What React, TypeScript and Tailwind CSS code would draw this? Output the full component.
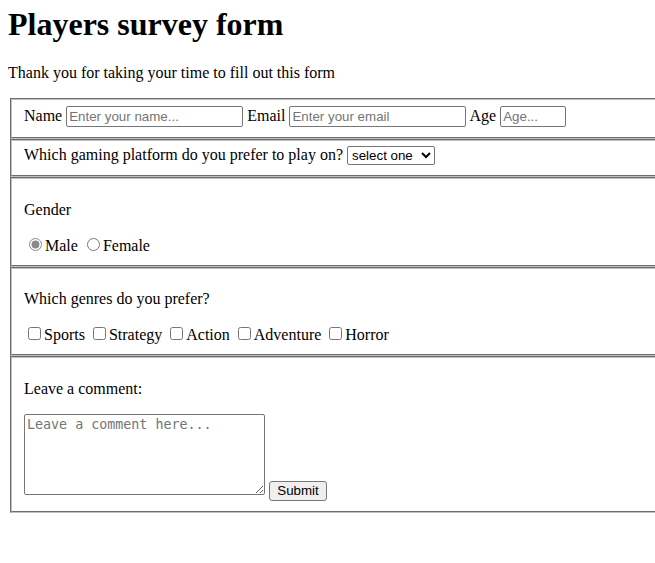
import React from "react";

const inputCls =
  "h-[21px] border border-[#767676] rounded-[2px] px-[2px] py-[1px] text-[13.33px] leading-[normal] font-['Liberation_Sans',Arial,sans-serif] placeholder:text-[#757575] align-baseline";

const fieldsetCls = "mx-[2px] border-2 border-[#c0c0c0] [border-style:groove] px-3 pt-[5.6px] pb-[10px] min-w-0";

const genres = ["Sports", "Strategy", "Action", "Adventure", "Horror"];

export default function App() {
  return (
    <div className="overflow-hidden bg-white text-black font-['Liberation_Serif','Times_New_Roman',serif] text-[16px] leading-[normal]">
      <div className="w-[720px] px-2 pb-10">
        <h1 className="text-[32px] font-bold leading-[normal] mt-[6px] mb-[21px]">Players survey form</h1>
        <p className="mb-4">Thank you for taking your time to fill out this form</p>
        <form onSubmit={(e) => e.preventDefault()}>
          <fieldset className={fieldsetCls}>
            <label>
              Name <input type="text" placeholder="Enter your name..." className={`${inputCls} w-[177px]`} />
            </label>{" "}
            <label>
              Email <input type="email" placeholder="Enter your email" className={`${inputCls} w-[177px]`} />
            </label>{" "}
            <label>
              Age <input type="number" placeholder="Age..." className={`${inputCls} w-[66px]`} />
            </label>
          </fieldset>

          <fieldset className={fieldsetCls}>
            <label>
              Which gaming platform do you prefer to play on?{" "}
              <select className="h-[19px] w-[88px] border border-[#767676] rounded-[2px] text-[13.33px] leading-[normal] font-['Liberation_Sans',Arial,sans-serif] align-baseline">
                <option>select one</option>
                <option>PC</option>
                <option>Console</option>
                <option>Mobile</option>
              </select>
            </label>
          </fieldset>

          <fieldset className={fieldsetCls}>
            <p className="my-4">Gender</p>
            <label>
              <input type="radio" name="gender" defaultChecked className="mt-[3px] mr-[3px] ml-[5px] accent-[#8a8a8a]" />
              Male
            </label>{" "}
            <label>
              <input type="radio" name="gender" className="mt-[3px] mr-[3px] ml-[5px]" />
              Female
            </label>
          </fieldset>

          <fieldset className={fieldsetCls}>
            <p className="my-4">Which genres do you prefer?</p>
            {genres.map((g) => (
              <React.Fragment key={g}>
                <label>
                  <input type="checkbox" className="my-[3px] mr-[3px] ml-[4px]" />
                  {g}
                </label>{" "}
              </React.Fragment>
            ))}
          </fieldset>

          <fieldset className={fieldsetCls}>
            <p className="my-4">Leave a comment:</p>
            <textarea
              placeholder="Leave a comment here..."
              className="w-[241px] h-[81px] border border-[#767676] rounded-[2px] px-[2px] py-[2px] text-[13.33px] leading-[normal] font-['DejaVu_Sans_Mono','Liberation_Mono',monospace] placeholder:text-[#757575] align-baseline"
            />{" "}
            <button
              type="submit"
              className="h-[20px] w-[58px] bg-[#efefef] border border-[#767676] rounded-[3px] text-[13.33px] font-['Liberation_Sans',Arial,sans-serif] leading-none"
            >
              Submit
            </button>
          </fieldset>
        </form>
      </div>
    </div>
  );
}
